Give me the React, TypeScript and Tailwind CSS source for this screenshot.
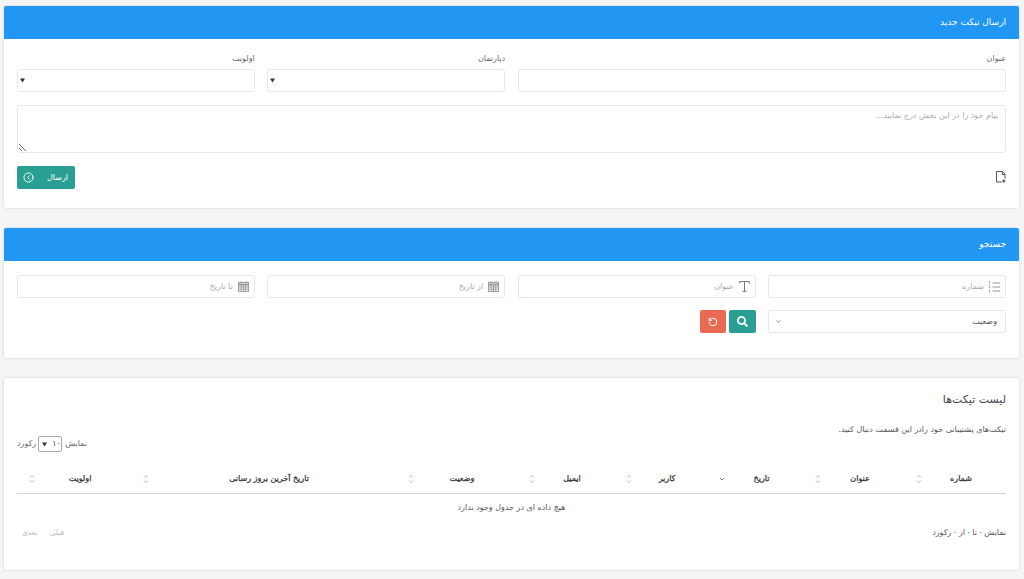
import { CircleChevronLeft, RotateCcw, ChevronDown } from "lucide-react";
import { FaSearch } from "react-icons/fa";

const font = "[font-family:'DejaVu_Sans',sans-serif]";
const inputBase =
  "block w-full h-[23px] rounded-[3px] border border-[#e8e8e8] bg-white text-[8px] text-[#555] placeholder:text-[#aaa] outline-none";
const cardBase = "bg-white rounded-[2px] shadow-[0_0_2px_rgba(0,0,0,0.2)] overflow-hidden";

function Sort({ down, left }: { down?: boolean; left: number }) {
  return (
    <svg width="6" height="10" viewBox="0 0 6 10" fill="none" stroke={down ? "#555" : "#aaa"} strokeWidth="0.8" className="absolute top-1/2 -translate-y-1/2" style={{ left }}>
      {down ? <path d="M1 4 3 6 5 4" /> : <path d="M1 3.6 3 1.4 5 3.6M1 6.4 3 8.6 5 6.4" />}
    </svg>
  );
}

function Caret({ className }: { className: string }) {
  return (
    <svg width="5" height="5" viewBox="0 0 5 5" className={`absolute pointer-events-none ${className}`}>
      <path d="M0 .5h5L2.5 4.5z" fill="#333" />
    </svg>
  );
}

function Calendar() {
  return (
    <svg width="11" height="11" viewBox="0 0 11 11" fill="none" stroke="#999" strokeWidth="0.9">
      <rect x="0.5" y="1.5" width="10" height="9" />
      <path d="M0 3.5h11" strokeWidth="2" />
      <path d="M0.5 6h10M0.5 8.2h10M3.2 3v7.5M5.5 3v7.5M7.8 3v7.5" />
      <path d="M3 0v2M8 0v2" />
    </svg>
  );
}

function NumberedList() {
  return (
    <svg width="11" height="12" viewBox="0 0 11 12" fill="none" stroke="#888" strokeWidth="0.9">
      <path d="M3.5 2h7.5M3.5 6h7.5M3.5 10h7.5" />
      <path d="M.5 0v3.5M.5 4.5v3M.5 8.5v3.5" strokeDasharray="1 .6" strokeWidth="1.1" />
    </svg>
  );
}

function SerifT() {
  return (
    <svg width="11" height="11" viewBox="0 0 11 11" fill="none" stroke="#777" strokeWidth="1">
      <path d="M.6 2.6V.6h9.8v2M5.5.6v9.8M3.5 10.4h4" />
    </svg>
  );
}

function FileAdd() {
  return (
    <svg width="10" height="12" viewBox="0 0 10 12" fill="none" stroke="#444" strokeWidth="0.9" className="mt-[5px]">
      <path d="M5.8 11H.5V.5h6L9 3.2v4.3M6.3.5v3H9" />
      <path d="M7.8 8.3v3.4M6.1 10h3.4" strokeWidth="1.1" />
    </svg>
  );
}

function Header({ title }: { title: string }) {
  return <div className="h-[33px] bg-[#2196f3] px-[13px] flex items-center text-[9px] text-white">{title}</div>;
}

function IconInput({ placeholder, icon }: { placeholder: string; icon: React.ReactNode }) {
  return (
    <div className="relative">
      <input dir="rtl" placeholder={placeholder} className={`${inputBase} pr-[21px] pl-2`} />
      <span className="absolute right-[6px] top-0 h-full flex items-center">{icon}</span>
    </div>
  );
}

function Select() {
  return (
    <div className="relative">
      <select className={`${inputBase} appearance-none`}></select>
      <Caret className="left-[3px] top-[9px]" />
    </div>
  );
}

const columns: [string, number, number, number, boolean?][] = [
  ["شماره", 96, 6, 6],
  ["عنوان", 100, 0, 5],
  ["تاریخ", 97, 0, 6, true],
  ["کاربر", 92, 0, 5],
  ["ایمیل", 98, 0, 6],
  ["وضعیت", 122, 0, 7],
  ["تاریخ آخرین بروز رسانی", 264, 0, 6],
  ["اولویت", 120, 6, 12],
];

export default function App() {
  return (
    <div dir="rtl" className={`${font} min-h-[579px] bg-[#f5f5f5] pt-[6px] pl-[4px] pr-[5px] flex flex-col gap-[20px] text-[#444]`}>
      <section className={`h-[202px] ${cardBase}`}>
        <Header title="ارسال تیکت جدید" />
        <div className="px-[13px] pt-[14px]">
          <div className="grid grid-cols-4 gap-x-[12.67px]">
            <label className="col-span-2 flex flex-col gap-[5px] text-[8px] text-[#666]">
              <span className="h-[11px] leading-[11px]">عنوان</span>
              <input className={inputBase} />
            </label>
            <label className="flex flex-col gap-[5px] text-[8px] text-[#666]">
              <span className="h-[11px] leading-[11px]">دپارتمان</span>
              <Select />
            </label>
            <label className="flex flex-col gap-[5px] text-[8px] text-[#666]">
              <span className="h-[11px] leading-[11px]">اولویت</span>
              <Select />
            </label>
          </div>
          <textarea
            placeholder="پیام خود را در این بخش درج نمایید..."
            className={`${inputBase} !h-[48px] mt-[13px] px-[7px] py-[4px]`}
          />
          <div className="mt-[13px] flex items-start justify-between">
            <FileAdd />
            <button className="w-[58px] h-[23px] rounded-[2px] bg-[#289f92] text-white text-[8px] flex items-center justify-between pr-[7px] pl-[6px]">
              <span>ارسال</span>
              <CircleChevronLeft size={11} strokeWidth={2} />
            </button>
          </div>
        </div>
      </section>

      <section className={`h-[130px] ${cardBase}`}>
        <Header title="جستجو" />
        <div className="px-[13px] pt-[14px] grid grid-cols-4 gap-x-[12.67px] gap-y-[12px] content-start">
          <IconInput placeholder="شماره" icon={<NumberedList />} />
          <IconInput placeholder="عنوان" icon={<SerifT />} />
          <IconInput placeholder="از تاریخ" icon={<Calendar />} />
          <IconInput placeholder="تا تاریخ" icon={<Calendar />} />
          <div className="relative">
            <select className={`${inputBase} appearance-none px-2`}>
              <option>وضعیت</option>
            </select>
            <ChevronDown size={7} className="absolute left-[7px] top-[8px] text-[#445]" strokeWidth={2} />
          </div>
          <div className="flex gap-[3px]">
            <button className="w-[26.5px] h-[23px] rounded-[2px] bg-[#289f92] text-white flex items-center justify-center">
              <FaSearch size={11} />
            </button>
            <button className="w-[26.5px] h-[23px] rounded-[2px] bg-[#e96a53] text-white flex items-center justify-center">
              <RotateCcw size={10} strokeWidth={2.4} />
            </button>
          </div>
        </div>
      </section>

      <section className={`h-[192px] ${cardBase} px-[13px] pt-[14px]`}>
        <h2 className="text-[11px] leading-[16px] text-[#444] font-normal">لیست تیکت‌ها</h2>
        <p className="mt-[16px] text-[8px] leading-[12px] text-[#555]">تیکت‌های پشتیبانی خود رادر این قسمت دنبال کنید.</p>
        <div className="flex justify-end">
          <div className="flex items-center text-[8px] text-[#666]">
            <span className="ml-[3px]">نمایش</span>
            <div className="relative">
              <select dir="ltr" className="block w-[24px] h-[16px] border border-[#aaa] rounded-[2px] bg-white text-[8px] text-[#444] appearance-none pl-[13px]">
                <option>۱۰</option>
              </select>
              <Caret className="left-[4px] top-[6px]" />
            </div>
            <span className="mr-[2px]">رکورد</span>
          </div>
        </div>
        <table className="w-full table-fixed mt-[14px] border-collapse">
          <thead>
            <tr className="border-b border-[#d4d4d4]">
              {columns.map(([name, w, pad, left, down]) => (
                <th key={name} style={{ width: w, paddingLeft: pad }} className="relative h-[27px] text-center text-[8px] font-normal text-[#333] [-webkit-text-stroke:0.25px]">
                  {name}
                  <Sort down={down} left={left} />
                </th>
              ))}
            </tr>
          </thead>
          <tbody>
            <tr>
              <td colSpan={8} className="h-[28px] pt-[1px] text-center text-[8px] text-[#555]">هیچ داده ای در جدول وجود ندارد</td>
            </tr>
          </tbody>
        </table>
        <div className="flex items-center justify-between h-[24px] text-[8px] text-[#555]">
          <span className="[word-spacing:-1px]">نمایش ۰ تا ۰ از ۰ رکورد</span>
          <div className="flex gap-[12px] pl-[5px] text-[7.5px] text-[#bbb]">
            <span>قبلی</span>
            <span>بعدی</span>
          </div>
        </div>
      </section>
    </div>
  );
}
